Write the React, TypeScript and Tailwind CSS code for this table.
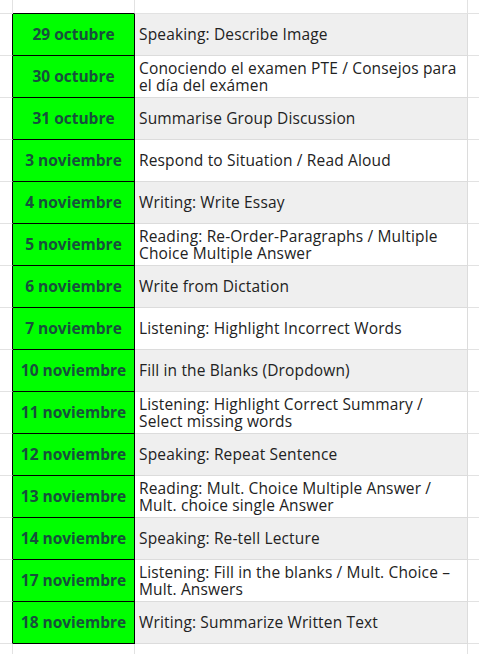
import React from "react";

const rows: { date: string; lines: string[] }[] = [
  { date: "29 octubre", lines: ["Speaking: Describe Image"] },
  { date: "30 octubre", lines: ["Conociendo el examen PTE / Consejos para", "el día del exámen"] },
  { date: "31 octubre", lines: ["Summarise Group Discussion"] },
  { date: "3 noviembre", lines: ["Respond to Situation / Read Aloud"] },
  { date: "4 noviembre", lines: ["Writing: Write Essay"] },
  { date: "5 noviembre", lines: ["Reading: Re-Order-Paragraphs / Multiple", "Choice Multiple Answer"] },
  { date: "6 noviembre", lines: ["Write from Dictation"] },
  { date: "7 noviembre", lines: ["Listening: Highlight Incorrect Words"] },
  { date: "10 noviembre", lines: ["Fill in the Blanks (Dropdown)"] },
  { date: "11 noviembre", lines: ["Listening: Highlight Correct Summary /", "Select missing words"] },
  { date: "12 noviembre", lines: ["Speaking: Repeat Sentence"] },
  { date: "13 noviembre", lines: ["Reading: Mult. Choice Multiple Answer /", "Mult. choice single Answer"] },
  { date: "14 noviembre", lines: ["Speaking: Re-tell Lecture"] },
  { date: "17 noviembre", lines: ["Listening: Fill in the blanks / Mult. Choice –", "Mult. Answers"] },
  { date: "18 noviembre", lines: ["Writing: Summarize Written Text"] },
];

export default function App() {
  return (
    <div
      className="w-[479px] h-[654px] overflow-hidden bg-white"
      style={{ fontFamily: '"Open Sans", "Noto Sans", sans-serif' }}
    >
      {/* top empty row */}
      <div className="flex h-[14px]">
        <div className="w-[13px] border-r border-b border-r-[#e2e2e2] border-b-[#e2e2e2]" />
        <div className="w-[122px] border-r border-b border-r-[#e2e2e2] border-b-black" />
        <div className="w-[333px] border-r border-b border-[#e2e2e2]" />
        <div className="flex-1 border-b border-[#e2e2e2]" />
      </div>
      {rows.map((r, i) => (
        <div key={i} className="flex h-[42px]">
          <div className="w-[13px] border-r border-b border-r-black border-b-[#e2e2e2]" />
          <div className="w-[122px] flex items-center justify-center bg-[#00ff00] border-r border-b border-black text-[15.5px] font-bold text-[#17503c] whitespace-nowrap">
            {r.date}
          </div>
          <div
            className={`w-[333px] flex flex-col justify-center pl-[4px] border-r border-b border-[#dcdcdc] text-[15.5px] leading-[17px] tracking-[0.15px] text-[#222222] ${
              i % 2 === 0 ? "bg-[#efefef]" : "bg-white"
            }`}
          >
            {r.lines.map((l, j) => (
              <div key={j} className="whitespace-nowrap">
                {l}
              </div>
            ))}
          </div>
          <div className="flex-1 border-b border-[#e2e2e2]" />
        </div>
      ))}
      <div className="flex h-[11px]">
        <div className="w-[13px] border-r border-[#e2e2e2]" />
        <div className="w-[122px] border-r border-[#e2e2e2]" />
        <div className="w-[333px] border-r border-[#e2e2e2]" />
        <div className="flex-1" />
      </div>
    </div>
  );
}
